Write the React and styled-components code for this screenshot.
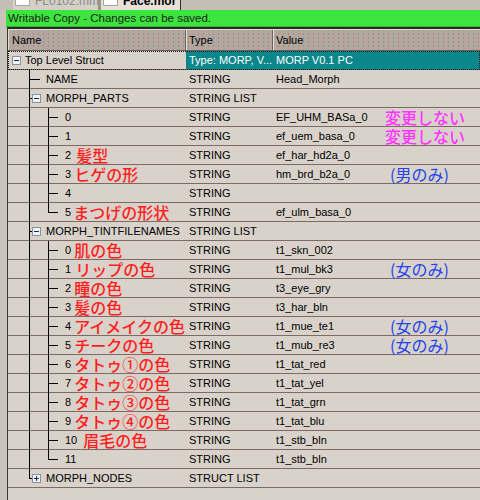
import React from "react"
import styled, { createGlobalStyle } from "styled-components"

const GlobalStyle = createGlobalStyle`
  html, body {
    margin: 0;
    padding: 0;
    background: #c9c3bb;
  }
  body {
    font-family: "Liberation Sans", Arial, sans-serif;
  }
`

const Page = styled.div`
  width: 480px;
  min-height: 100vh;
  display: flex;
  flex-direction: column;
  overflow: hidden;
`
const TabStrip = styled.div`
  height: 10px;
  display: flex;
  align-items: flex-end;
  padding-left: 13px;
  overflow: hidden;
  background: #c4beb6;
`
const Tab = styled.div`
  width: ${p => p.width}px;
  height: 10px;
  box-sizing: border-box;
  display: flex;
  align-items: flex-end;
  padding-left: 2px;
  overflow: hidden;
  background: ${p => (p.active ? "#e6e2da" : "#d4cfc7")};
  border-right: ${p => (p.active ? "1px solid #2a2a2a" : "3px solid #9a948c")};
`
const TabIcon = styled.span`
  flex-shrink: 0;
  width: 15px;
  height: 14px;
  box-sizing: border-box;
  margin-bottom: 4px;
  background: #ffffff;
  border: 1px solid #a8a4a0;
`
const TabLabel = styled.span`
  margin-left: 5px;
  margin-bottom: 3px;
  font-size: 12px;
  line-height: 12px;
  white-space: nowrap;
  font-weight: ${p => (p.active ? 700 : 400)};
  color: ${p => (p.active ? "#000" : "#8c8c8c")};
`
const StatusBar = styled.div`
  height: 17px;
  margin-left: 6px;
  padding-left: 2px;
  box-sizing: border-box;
  background: #3de43d;
  border-bottom: 1px solid #2fb82f;
  font-size: 11.5px;
  line-height: 16px;
  color: #1c1c1c;
`
const Frame = styled.div`
  flex: 1;
  margin-left: 7px;
  border-left: 1px solid #3c3a38;
  border-top: 2px solid #2c2a28;
  background: #d8d2ca;
`
const Header = styled.div`
  height: 22px;
  box-sizing: border-box;
  display: grid;
  grid-template-columns: 178px 87px 1fr;
  border-top: 1px solid #e4ded6;
  border-bottom: 1px solid #6e625c;
  background-color: #b2a8a0;
  background-image:
    radial-gradient(circle, #dc8e8a 0.7px, transparent 1.1px),
    radial-gradient(circle, #9a9088 0.6px, transparent 1px);
  background-size: 11px 7px, 5px 4px;
  background-position: 1px 1px, 3px 2px;
`
const HeaderCell = styled.div`
  padding-left: ${p => p.pad}px;
  font-size: 11px;
  line-height: 20px;
  color: #000;
  border-right: 1px solid #6e625c;
  box-shadow: inset 1px 0 0 #e2dcd4;
  &:last-child {
    border-right: none;
  }
`
const Row = styled.div`
  height: 19px;
  box-sizing: border-box;
  display: grid;
  grid-template-columns: 178px 87px 1fr;
  border-bottom: 1px solid #7c6a64;
  outline: ${p => (p.selected ? "1px dotted #1a1a1a" : "none")};
  outline-offset: -1px;
  font-size: 11px;
  line-height: 18px;
  color: #000;
`
const NameCell = styled.div`
  display: flex;
  align-items: flex-start;
  white-space: nowrap;
  min-width: 0;
`
const Guide = styled.svg`
  flex-shrink: 0;
  display: block;
  overflow: visible;
`
const TypeCell = styled.div`
  padding-left: 3px;
  white-space: nowrap;
  overflow: hidden;
  background: ${p => (p.selected ? "#0b878b" : "transparent")};
  color: ${p => (p.selected ? "#ffffff" : "#000")};
`
const ValueCell = styled.div`
  display: flex;
  padding-left: 3px;
  white-space: nowrap;
  background: ${p => (p.selected ? "#0b878b" : "transparent")};
  color: ${p => (p.selected ? "#ffffff" : "#000")};
`
const ValueText = styled.span`
  width: 109px;
  flex-shrink: 0;
`
const noteColors = {
  red: "#ff1e1e",
  pink: "#ff34ff",
  blue: "#2344ee",
}
const Note = styled.span`
  margin-left: ${p => p.gap}px;
  font-family: "Noto Sans CJK JP", "Noto Sans", sans-serif;
  font-size: 16px;
  line-height: 18px;
  font-weight: ${p => (p.kind === "blue" ? 400 : 500)};
  color: ${p => noteColors[p.kind]};
`

const rows = [
  { name: "Top Level Struct", type: "Type: MORP, V...", value: "MORP V0.1 PC", level: 0, box: "minus", selected: true },
  { name: "NAME", type: "STRING", value: "Head_Morph", level: 1 },
  { name: "MORPH_PARTS", type: "STRING LIST", level: 1, box: "minus" },
  { name: "0", type: "STRING", value: "EF_UHM_BASa_0", level: 2, note: { text: "変更しない", kind: "pink", gap: 0 } },
  { name: "1", type: "STRING", value: "ef_uem_basa_0", level: 2, note: { text: "変更しない", kind: "pink", gap: 0 } },
  { name: "2", label: "髪型", gap: 5, type: "STRING", value: "ef_har_hd2a_0", level: 2 },
  { name: "3", label: "ヒゲの形", type: "STRING", value: "hm_brd_b2a_0", level: 2, note: { text: "(男のみ)", kind: "blue", gap: 5 } },
  { name: "4", type: "STRING", value: "", level: 2 },
  { name: "5", label: "まつげの形状", gap: 2, type: "STRING", value: "ef_ulm_basa_0", level: 2, last: true },
  { name: "MORPH_TINTFILENAMES", type: "STRING LIST", level: 1, box: "minus" },
  { name: "0", label: "肌の色", type: "STRING", value: "t1_skn_002", level: 2 },
  { name: "1", label: "リップの色", gap: 4, type: "STRING", value: "t1_mul_bk3", level: 2, note: { text: "(女のみ)", kind: "blue", gap: 5 } },
  { name: "2", label: "瞳の色", type: "STRING", value: "t3_eye_gry", level: 2 },
  { name: "3", label: "髪の色", type: "STRING", value: "t3_har_bln", level: 2 },
  { name: "4", label: "アイメイクの色", type: "STRING", value: "t1_mue_te1", level: 2, note: { text: "(女のみ)", kind: "blue", gap: 5 } },
  { name: "5", label: "チークの色", type: "STRING", value: "t1_mub_re3", level: 2, note: { text: "(女のみ)", kind: "blue", gap: 5 } },
  { name: "6", label: "タトゥ①の色", type: "STRING", value: "t1_tat_red", level: 2 },
  { name: "7", label: "タトゥ②の色", type: "STRING", value: "t1_tat_yel", level: 2 },
  { name: "8", label: "タトゥ③の色", type: "STRING", value: "t1_tat_grn", level: 2 },
  { name: "9", label: "タトゥ④の色", type: "STRING", value: "t1_tat_blu", level: 2 },
  { name: "10", label: "眉毛の色", gap: 6, type: "STRING", value: "t1_stb_bln", level: 2 },
  { name: "11", type: "STRING", value: "t1_stb_bln", level: 2, last: true },
  { name: "MORPH_NODES", type: "STRUCT LIST", level: 1, box: "plus", last: true },
]

// little +/- box of the tree, x is its left pixel
const ExpandBox = ({ x, kind }) => (
  <g>
    <rect x={x + 0.5} y={5.5} width={8} height={8} fill="#f3f3f0" stroke="#8093aa" />
    <line x1={x + 2} y1={9.5} x2={x + 7} y2={9.5} stroke="#1a2a5a" />
    {kind === "plus" && <line x1={x + 4.5} y1={7} x2={x + 4.5} y2={12} stroke="#1a2a5a" />}
  </g>
)

const TreeGuide = ({ level, last, box }) => {
  const width = [17, 38, 57][level]
  return (
    <Guide width={width} height={19} shapeRendering="crispEdges">
      {level === 0 && <ExpandBox x={4} kind={box} />}
      {level === 1 && (
        <g stroke="#000">
          <line x1={21.5} y1={0} x2={21.5} y2={last ? 10 : 19} />
          <line x1={21.5} y1={9.5} x2={box ? 24 : 32} y2={9.5} />
        </g>
      )}
      {level === 1 && box && <ExpandBox x={24} kind={box} />}
      {level === 2 && (
        <g stroke="#000">
          <line x1={21.5} y1={0} x2={21.5} y2={19} />
          <line x1={40.5} y1={0} x2={40.5} y2={last ? 10 : 19} />
          <line x1={40.5} y1={9.5} x2={50} y2={9.5} />
        </g>
      )}
    </Guide>
  )
}

const App = () => (
  <Page>
    <GlobalStyle />
    <TabStrip>
      <Tab width={88}>
        <TabIcon />
        <TabLabel>FL0102.mm</TabLabel>
      </Tab>
      <Tab width={80} active>
        <TabIcon />
        <TabLabel active>Face.mor</TabLabel>
      </Tab>
    </TabStrip>
    <StatusBar>Writable Copy - Changes can be saved.</StatusBar>
    <Frame>
      <Header>
        <HeaderCell pad={4}>Name</HeaderCell>
        <HeaderCell pad={3}>Type</HeaderCell>
        <HeaderCell pad={3}>Value</HeaderCell>
      </Header>
      {rows.map((r, i) => (
        <Row key={i} selected={r.selected}>
          <NameCell>
            <TreeGuide level={r.level} last={r.last} box={r.box} />
            <span>{r.name}</span>
            {r.label && <Note kind="red" gap={r.gap ?? 3}>{r.label}</Note>}
          </NameCell>
          <TypeCell selected={r.selected}>{r.type}</TypeCell>
          <ValueCell selected={r.selected}>
            <ValueText>{r.value}</ValueText>
            {r.note && <Note kind={r.note.kind} gap={r.note.gap}>{r.note.text}</Note>}
          </ValueCell>
        </Row>
      ))}
    </Frame>
  </Page>
)

export default App
